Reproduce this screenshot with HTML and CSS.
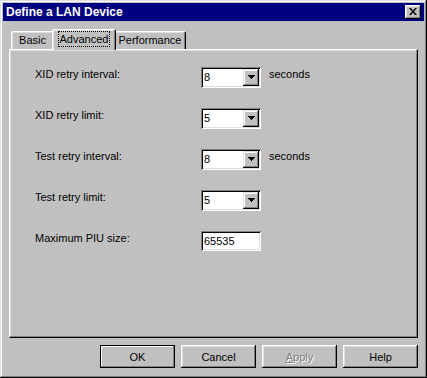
FILE: index.html
```html
<!DOCTYPE html>
<html>
<head>
<meta charset="utf-8">
<title>Define a LAN Device</title>
<link rel="stylesheet" href="styles.css">
</head>
<body>
<div class="window">
  <div class="titlebar">
    <span class="title">Define a LAN Device</span>
    <button class="close" aria-label="Close">
      <svg width="8" height="7" viewBox="0 0 8 7"><path d="M0 0h2l2 2.4L6 0h2L5 3.5 8 7H6L4 4.6 2 7H0l3-3.5z" fill="#000"/></svg>
    </button>
  </div>
  <div class="content">
    <div class="tabs">
      <div class="tab tab-basic">Basic</div>
      <div class="tab tab-advanced active"><span class="focus">Advanced</span></div>
      <div class="tab tab-performance">Performance</div>
    </div>
    <div class="panel">
      <div class="row">
        <label class="label">XID retry interval:</label>
        <div class="combo"><span class="value">8</span><span class="drop"><svg width="7" height="4" viewBox="0 0 7 4"><path d="M0 0h7v1H6v1H5v1H4v1H3V3H2V2H1V1H0z" fill="#000"/></svg></span></div>
        <span class="unit">seconds</span>
      </div>
      <div class="row">
        <label class="label">XID retry limit:</label>
        <div class="combo"><span class="value">5</span><span class="drop"><svg width="7" height="4" viewBox="0 0 7 4"><path d="M0 0h7v1H6v1H5v1H4v1H3V3H2V2H1V1H0z" fill="#000"/></svg></span></div>
      </div>
      <div class="row">
        <label class="label">Test retry interval:</label>
        <div class="combo"><span class="value">8</span><span class="drop"><svg width="7" height="4" viewBox="0 0 7 4"><path d="M0 0h7v1H6v1H5v1H4v1H3V3H2V2H1V1H0z" fill="#000"/></svg></span></div>
        <span class="unit">seconds</span>
      </div>
      <div class="row">
        <label class="label">Test retry limit:</label>
        <div class="combo"><span class="value">5</span><span class="drop"><svg width="7" height="4" viewBox="0 0 7 4"><path d="M0 0h7v1H6v1H5v1H4v1H3V3H2V2H1V1H0z" fill="#000"/></svg></span></div>
      </div>
      <div class="row">
        <label class="label">Maximum PIU size:</label>
        <div class="textbox">65535</div>
      </div>
    </div>
    <div class="buttons">
      <button class="btn default">OK</button>
      <button class="btn">Cancel</button>
      <button class="btn disabled"><u>A</u>pply</button>
      <button class="btn">Help</button>
    </div>
  </div>
</div>
</body>
</html>
```
FILE: styles.css
```css
* { box-sizing: border-box; }

body {
  margin: 0;
  background: #c0c0c0;
  font-family: "Liberation Sans", Arial, sans-serif;
  font-size: 11px;
  color: #000;
}

.window {
  width: 427px;
  height: 378px;
  padding: 3px;
  background: #c0c0c0;
  box-shadow: inset -1px -1px #000, inset 1px 1px #dfdfdf, inset -2px -2px #808080, inset 2px 2px #fff;
  display: flex;
  flex-direction: column;
}

.titlebar {
  height: 18px;
  background: #000080;
  color: #fff;
  display: flex;
  align-items: center;
  justify-content: space-between;
  padding: 0 3px 0 3px;
}

.title {
  font-weight: bold;
  font-size: 12px;
  line-height: 14px;
}

.close {
  width: 16px;
  height: 14px;
  padding: 0 0 1px 0;
  border: 0;
  background: #c0c0c0;
  box-shadow: inset -1px -1px #000, inset 1px 1px #fff, inset -2px -2px #808080, inset 2px 2px #dfdfdf;
  display: flex;
  align-items: center;
  justify-content: center;
}

.content {
  padding: 8px 6px 0 6px;
  flex: 1;
  display: flex;
  flex-direction: column;
}

.tabs {
  display: flex;
  align-items: flex-end;
  padding-left: 2px;
  height: 20px;
  position: relative;
  z-index: 1;
}

.tab {
  height: 18px;
  border-top: 1px solid #fff;
  border-left: 1px solid #fff;
  border-right: 1px solid #000;
  border-radius: 2px 2px 0 0;
  box-shadow: inset -1px 0 #808080, inset 1px 1px #dfdfdf;
  background: #c0c0c0;
  text-align: center;
  line-height: 16px;
}

.tab-basic { width: 43px; }
.tab-advanced { width: 60px; }
.tab-performance { width: 72px; }

.tab.active {
  height: 21px;
  margin: 0 -2px -1px -2px;
  width: 64px;
  padding-top: 1px;
  position: relative;
  z-index: 2;
}

.focus {
  outline: 1px dotted #000;
  outline-offset: 0;
  padding: 0 1px;
  line-height: 14px;
  display: inline-block;
}

.panel {
  width: 409px;
  height: 289px;
  border-top: 1px solid #fff;
  border-left: 1px solid #fff;
  border-right: 1px solid #000;
  border-bottom: 1px solid #000;
  box-shadow: inset -1px -1px #808080, inset 1px 1px #dfdfdf;
  padding: 17px 0 0 25px;
  display: flex;
  flex-direction: column;
  gap: 20px;
}

.row {
  display: flex;
  align-items: flex-start;
  height: 21px;
}

.label {
  width: 166px;
  line-height: 13px;
  padding-top: 1px;
}

.combo {
  width: 60px;
  height: 21px;
  padding: 2px;
  background: #fff;
  box-shadow: inset 1px 1px #808080, inset -1px -1px #fff, inset 2px 2px #000, inset -2px -2px #dfdfdf;
  display: flex;
}

.value {
  flex: 1;
  padding-left: 1px;
  line-height: 17px;
}

.drop {
  width: 16px;
  height: 17px;
  background: #c0c0c0;
  box-shadow: inset -1px -1px #000, inset 1px 1px #dfdfdf, inset -2px -2px #808080, inset 2px 2px #fff;
  display: flex;
  align-items: center;
  justify-content: center;
  padding-bottom: 1px;
}

.unit {
  margin-left: 8px;
  line-height: 13px;
  padding-top: 1px;
}

.textbox {
  width: 60px;
  height: 20px;
  padding: 2px 3px;
  background: #fff;
  box-shadow: inset 1px 1px #808080, inset -1px -1px #fff, inset 2px 2px #000, inset -2px -2px #dfdfdf;
  line-height: 16px;
}

.buttons {
  margin-top: 7px;
  display: flex;
  justify-content: flex-end;
  gap: 6px;
}

.btn {
  width: 75px;
  height: 23px;
  padding: 0;
  border: 0;
  background: #c0c0c0;
  font-family: inherit;
  font-size: 11px;
  color: #000;
  box-shadow: inset -1px -1px #000, inset 1px 1px #fff, inset -2px -2px #808080, inset 2px 2px #dfdfdf;
}

.btn.default {
  box-shadow: inset 0 0 0 1px #000, inset -2px -2px #808080, inset 2px 2px #fff;
}

.btn.disabled {
  color: #808080;
  text-shadow: 1px 1px #fff;
}
```
